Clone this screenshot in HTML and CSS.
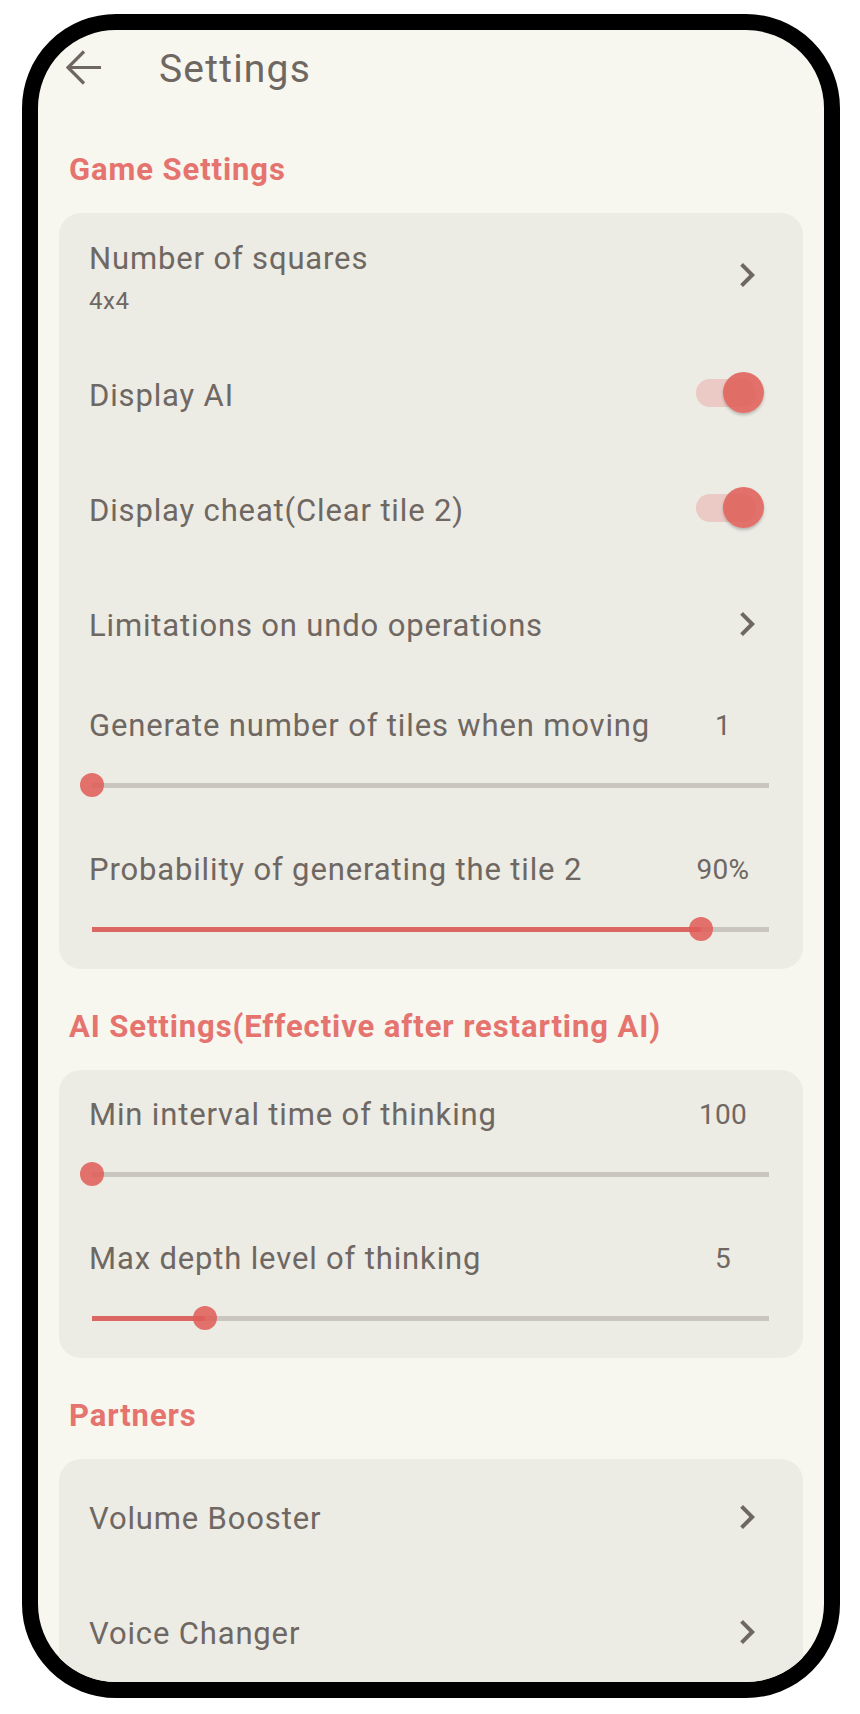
FILE: index.html
```html
<!DOCTYPE html>
<html lang="en">
<head>
<meta charset="utf-8">
<title>Settings</title>
<link rel="stylesheet" href="styles.css">
</head>
<body>
<div class="phone">
  <div class="screen">
    <header class="appbar">
      <svg class="back" width="36" height="36" viewBox="0 0 36 36" aria-hidden="true">
        <path d="M35 17.5H3M18 1.5L2 17.5L18 33.5" fill="none" stroke="#6f6762" stroke-width="3.2" stroke-linejoin="miter"/>
      </svg>
      <h1 class="title">Settings</h1>
    </header>

    <section class="section first">
      <h2 class="section-title">Game Settings</h2>
      <div class="card">
        <div class="row tall">
          <div class="text">
            <div class="label">Number of squares</div>
            <div class="summary">4x4</div>
          </div>
          <svg class="chevron" width="48" height="48" viewBox="0 0 24 24" aria-hidden="true"><path d="M10 6L8.59 7.41 13.17 12l-4.58 4.59L10 18l6-6z"/></svg>
        </div>
        <div class="row">
          <div class="label shifted">Display AI</div>
          <div class="switch"><span class="track"></span><span class="thumb"></span></div>
        </div>
        <div class="row">
          <div class="label shifted">Display cheat(Clear tile 2)</div>
          <div class="switch"><span class="track"></span><span class="thumb"></span></div>
        </div>
        <div class="row">
          <div class="label shifted">Limitations on undo operations</div>
          <svg class="chevron" width="48" height="48" viewBox="0 0 24 24" aria-hidden="true"><path d="M10 6L8.59 7.41 13.17 12l-4.58 4.59L10 18l6-6z"/></svg>
        </div>
        <div class="slider-row">
          <div class="slider-head"><span class="label">Generate number of tiles when moving</span><span class="value">1</span></div>
          <div class="slider"><div class="rail"><div class="fill" style="width:0%"></div></div><span class="knob" style="left:0%"></span></div>
        </div>
        <div class="slider-row">
          <div class="slider-head"><span class="label">Probability of generating the tile 2</span><span class="value">90%</span></div>
          <div class="slider"><div class="rail"><div class="fill" style="width:90%"></div></div><span class="knob" style="left:90%"></span></div>
        </div>
      </div>
    </section>

    <section class="section">
      <h2 class="section-title">AI Settings(Effective after restarting AI)</h2>
      <div class="card">
        <div class="slider-row">
          <div class="slider-head"><span class="label">Min interval time of thinking</span><span class="value">100</span></div>
          <div class="slider"><div class="rail"><div class="fill" style="width:0%"></div></div><span class="knob" style="left:0%"></span></div>
        </div>
        <div class="slider-row">
          <div class="slider-head"><span class="label">Max depth level of thinking</span><span class="value">5</span></div>
          <div class="slider"><div class="rail"><div class="fill" style="width:16.67%"></div></div><span class="knob" style="left:16.67%"></span></div>
        </div>
      </div>
    </section>

    <section class="section">
      <h2 class="section-title">Partners</h2>
      <div class="card">
        <div class="row">
          <div class="label shifted">Volume Booster</div>
          <svg class="chevron" width="48" height="48" viewBox="0 0 24 24" aria-hidden="true"><path d="M10 6L8.59 7.41 13.17 12l-4.58 4.59L10 18l6-6z"/></svg>
        </div>
        <div class="row">
          <div class="label shifted">Voice Changer</div>
          <svg class="chevron" width="48" height="48" viewBox="0 0 24 24" aria-hidden="true"><path d="M10 6L8.59 7.41 13.17 12l-4.58 4.59L10 18l6-6z"/></svg>
        </div>
      </div>
    </section>
  </div>
</div>
</body>
</html>
```

FILE: styles.css
```css
* { box-sizing: border-box; }

html, body {
  margin: 0;
  padding: 0;
  background: #ffffff;
}

body {
  font-family: Roboto, "Noto Sans", "Liberation Sans", sans-serif;
  color: #6f6762;
}

.phone {
  margin: 14px 0 0 22px;
  width: 818px;
  height: 1684px;
  border: 16px solid #000;
  border-radius: 94px;
  overflow: hidden;
  background: #f7f6ef;
}

.screen {
  display: flex;
  flex-direction: column;
}

.appbar {
  height: 76px;
  display: flex;
  align-items: center;
  padding-left: 28px;
  margin-bottom: 6px;
}

.back {
  flex: none;
  display: block;
}

.title {
  margin: 0 0 0 57px;
  font-size: 39px;
  font-weight: 400;
  line-height: 46px;
  padding-top: 2px;
  letter-spacing: 1.2px;
  color: #6f6762;
}

.section {
  padding-top: 38px;
  display: flex;
  flex-direction: column;
}

.section-title {
  margin: 0 0 23px 0;
  padding-left: 31px;
  font-size: 31px;
  line-height: 40px;
  font-weight: 700;
  letter-spacing: 0.9px;
  color: #e5736e;
}

.card {
  margin: 0 21px;
  background: #ecebe4;
  border-radius: 22px;
  display: flex;
  flex-direction: column;
}

.row {
  height: 115px;
  display: flex;
  align-items: center;
  justify-content: space-between;
  padding: 0 32px 0 30px;
}

.row.tall {
  height: 123px;
}

.text {
  display: flex;
  flex-direction: column;
  padding-top: 6px;
}

.label {
  font-size: 31px;
  line-height: 40px;
  letter-spacing: 0.85px;
  color: #6f6762;
  white-space: nowrap;
}

.label.shifted {
  padding-top: 4px;
}

.summary {
  margin-top: 6px;
  font-size: 24px;
  line-height: 32px;
  letter-spacing: 0.5px;
  color: #6f6762;
}

.chevron {
  flex: none;
  display: block;
  fill: #6f6762;
}

.switch {
  position: relative;
  flex: none;
  width: 70px;
  height: 42px;
  margin-right: 7px;
  margin-top: -2px;
}

.switch .track {
  position: absolute;
  left: 2px;
  top: 7px;
  width: 60px;
  height: 28px;
  border-radius: 14px;
  background: #ebc9c4;
}

.switch .thumb {
  position: absolute;
  left: 29px;
  top: 0;
  width: 41px;
  height: 41px;
  border-radius: 50%;
  background: rgba(223, 93, 87, 0.86);
  box-shadow: 0 2px 3px rgba(0, 0, 0, 0.22);
}

.slider-row {
  height: 144px;
  padding: 25px 30px 0 30px;
  display: flex;
  flex-direction: column;
}

.slider-head {
  display: flex;
  align-items: center;
  justify-content: space-between;
  height: 40px;
}

.value {
  width: 72px;
  margin-right: 14px;
  text-align: center;
  font-size: 28px;
  line-height: 40px;
  letter-spacing: 0.3px;
  color: #6f6762;
}

.slider {
  position: relative;
  margin: 27px 4px 0 3px;
  height: 24px;
  display: flex;
  align-items: center;
}

.rail {
  width: 100%;
  height: 5px;
  background: #c9c6bf;
  display: flex;
}

.fill {
  height: 100%;
  background: #dc6661;
}

.knob {
  position: absolute;
  top: 0;
  width: 24px;
  height: 24px;
  margin-left: -12px;
  border-radius: 50%;
  background: rgba(223, 93, 87, 0.86);
}
```
